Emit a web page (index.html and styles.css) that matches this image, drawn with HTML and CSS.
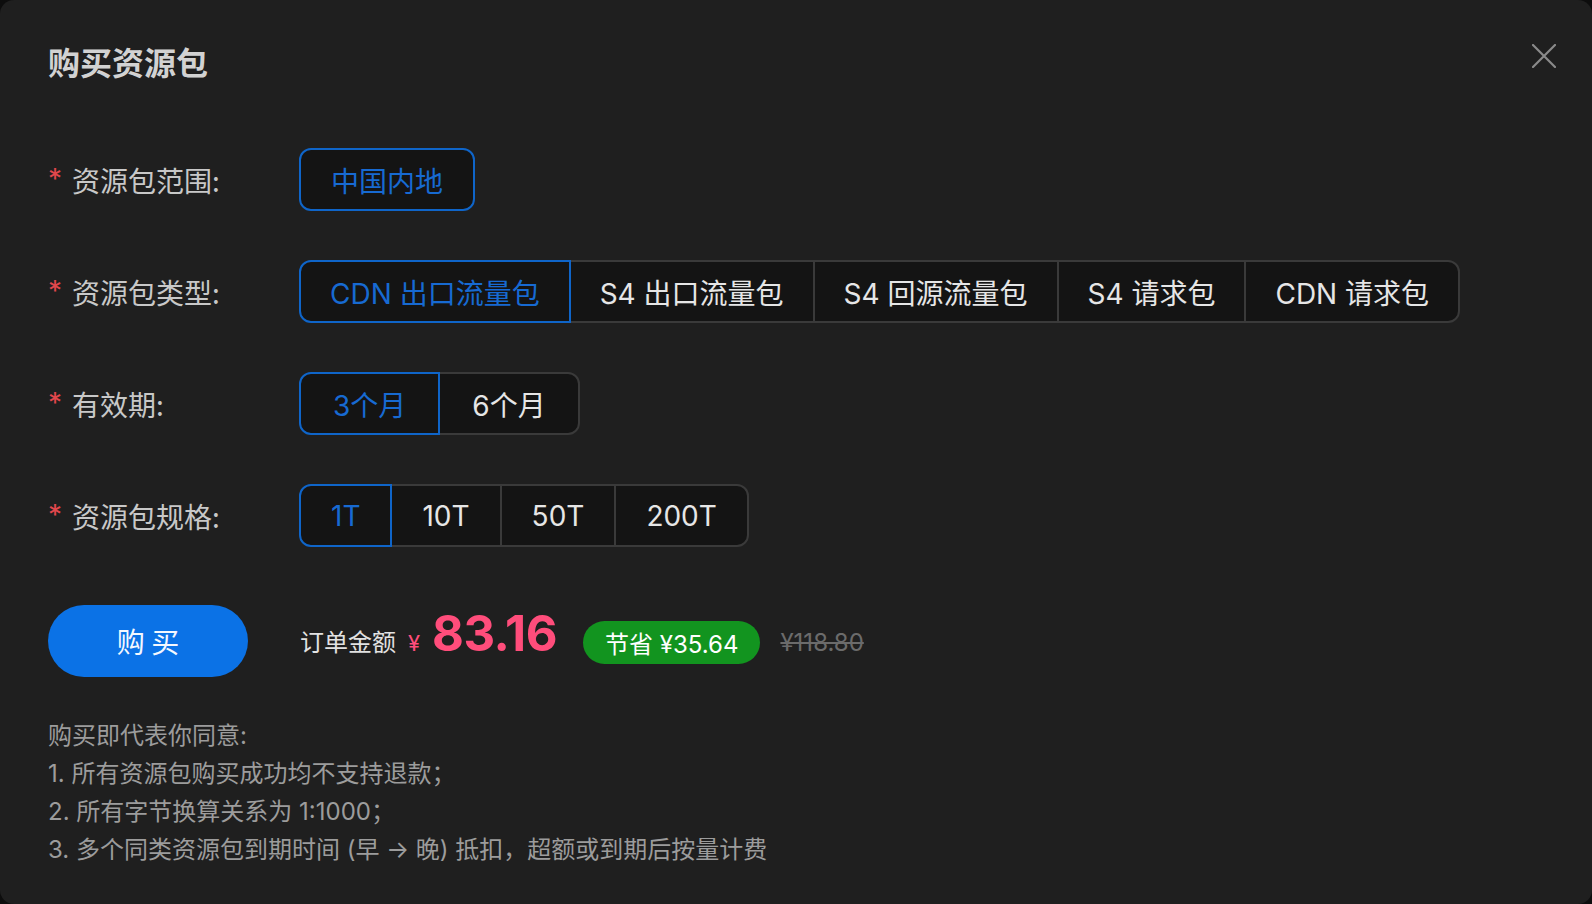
FILE: index.html
```html
<!DOCTYPE html>
<html lang="zh-CN">
<head>
<meta charset="utf-8">
<title>购买资源包</title>
<link rel="stylesheet" href="styles.css">
</head>
<body>
<div class="modal">
  <div class="header">
    <h1 class="title">购买资源包</h1>
    <button class="close" aria-label="关闭">
      <svg width="24" height="24" viewBox="0 0 24 24"><path d="M1 1L23 23M23 1L1 23" stroke="#8a8a8a" stroke-width="2.2" stroke-linecap="round" fill="none"/></svg>
    </button>
  </div>

  <div class="form">
    <div class="row">
      <div class="label"><span class="req">*</span>资源包范围:</div>
      <div class="group">
        <div class="opt single active">中国内地</div>
      </div>
    </div>
    <div class="row">
      <div class="label"><span class="req">*</span>资源包类型:</div>
      <div class="group seg type">
        <div class="opt active">CDN 出口流量包</div>
        <div class="opt">S4 出口流量包</div>
        <div class="opt">S4 回源流量包</div>
        <div class="opt">S4 请求包</div>
        <div class="opt">CDN 请求包</div>
      </div>
    </div>
    <div class="row">
      <div class="label"><span class="req">*</span>有效期:</div>
      <div class="group seg period">
        <div class="opt active">3个月</div>
        <div class="opt">6个月</div>
      </div>
    </div>
    <div class="row">
      <div class="label"><span class="req">*</span>资源包规格:</div>
      <div class="group seg">
        <div class="opt active">1T</div>
        <div class="opt">10T</div>
        <div class="opt">50T</div>
        <div class="opt">200T</div>
      </div>
    </div>
  </div>

  <div class="buybar">
    <button class="buy">购 买</button>
    <div class="price">
      <span class="price-label">订单金额</span>
      <span class="yen">¥</span>
      <span class="amount">83.16</span>
      <span class="save">节省 ¥35.64</span>
      <span class="orig">¥118.80</span>
    </div>
  </div>

  <div class="terms">
    <p>购买即代表你同意:</p>
    <p>1. 所有资源包购买成功均不支持退款；</p>
    <p>2. 所有字节换算关系为 1:1000；</p>
    <p>3. 多个同类资源包到期时间 (早 → 晚) 抵扣，超额或到期后按量计费</p>
  </div>
</div>
</body>
</html>
```

FILE: styles.css
```css
* { box-sizing: border-box; }
html, body { margin: 0; padding: 0; }
body {
  background: #0d0d0d;
  width: 1592px;
  height: 904px;
  overflow: hidden;
  font-family: "Inter", "Noto Sans CJK SC", sans-serif;
}
.modal {
  position: relative;
  width: 1592px;
  height: 904px;
  background: #1f1f1f;
  border-radius: 14px;
  padding: 39px 48px 0 48px;
}
.header {
  display: flex;
  align-items: center;
  height: 44px;
}
.title {
  margin: 0;
  font-size: 32px;
  line-height: 44px;
  font-weight: 700;
  color: #d2d2d2;
  font-family: "Noto Sans CJK SC", sans-serif;
}
.close {
  position: absolute;
  top: 44px;
  right: 36px;
  width: 24px;
  height: 24px;
  padding: 0;
  border: 0;
  background: none;
  display: block;
}
.close svg { display: block; }

.form {
  margin-top: 65px;
  display: flex;
  flex-direction: column;
  gap: 49px;
}
.row {
  display: flex;
  align-items: center;
  height: 63px;
}
.label {
  width: 251px;
  flex: none;
  font-size: 28px;
  color: #c8c8c8;
  font-family: "Noto Sans CJK SC", sans-serif;
  display: flex;
  align-items: center;
}
.req {
  color: #e2474c;
  font-family: "Inter", sans-serif;
  width: 24px;
  font-size: 28px;
  position: relative;
  top: -1px;
}
.group {
  display: flex;
  height: 63px;
}
.opt {
  height: 63px;
  padding: 0 30px;
  display: flex;
  align-items: center;
  font-size: 28px;
  color: #e6e6e6;
  background: #141414;
  border: 2px solid #3a3a3a;
  white-space: pre;
  position: relative;
}
.type .opt { padding: 0 29px; }
.period .opt { padding: 0 32px; }
.seg .opt + .opt { margin-left: -2px; }
.seg .opt:first-child { border-radius: 12px 0 0 12px; }
.seg .opt:last-child { border-radius: 0 12px 12px 0; }
.opt.single { border-radius: 12px; }
.opt.active {
  color: #176ad2;
  border-color: #0f65c9;
  z-index: 1;
}

.buybar {
  margin-top: 58px;
  display: flex;
  align-items: center;
  height: 72px;
}
.buy {
  width: 200px;
  height: 72px;
  border: 0;
  border-radius: 36px;
  background: #0b72e6;
  color: #f4f8ff;
  font-size: 28px;
  font-family: "Noto Sans CJK SC", sans-serif;
  padding: 0;
  white-space: pre;
}
.price {
  margin-left: 52px;
  display: flex;
  align-items: baseline;
  padding-bottom: 12px;
}
.price-label {
  font-size: 24px;
  color: #e2e2e2;
  font-family: "Noto Sans CJK SC", sans-serif;
}
.yen {
  font-size: 22px;
  color: #ff4d7b;
  margin-left: 12px;
}
.amount {
  font-size: 49px;
  font-weight: 700;
  color: #ff4d7b;
  margin-left: 12px;
  line-height: 1;
  letter-spacing: -0.5px;
}
.save {
  margin-left: 26px;
  height: 43px;
  padding: 0 22px;
  border-radius: 22px;
  background: #12941f;
  color: #ffffff;
  font-size: 24px;
  display: inline-flex;
  align-items: center;
  position: relative;
  top: 2px;
}
.orig {
  margin-left: 20px;
  font-size: 24px;
  color: #6b6b6b;
  text-decoration: line-through;
}

.terms {
  margin-top: 40px;
  font-size: 24px;
  line-height: 38px;
  color: #9c9c9c;
  font-family: "Inter", "Noto Sans CJK SC", sans-serif;
}
.terms p { margin: 0; }
```
